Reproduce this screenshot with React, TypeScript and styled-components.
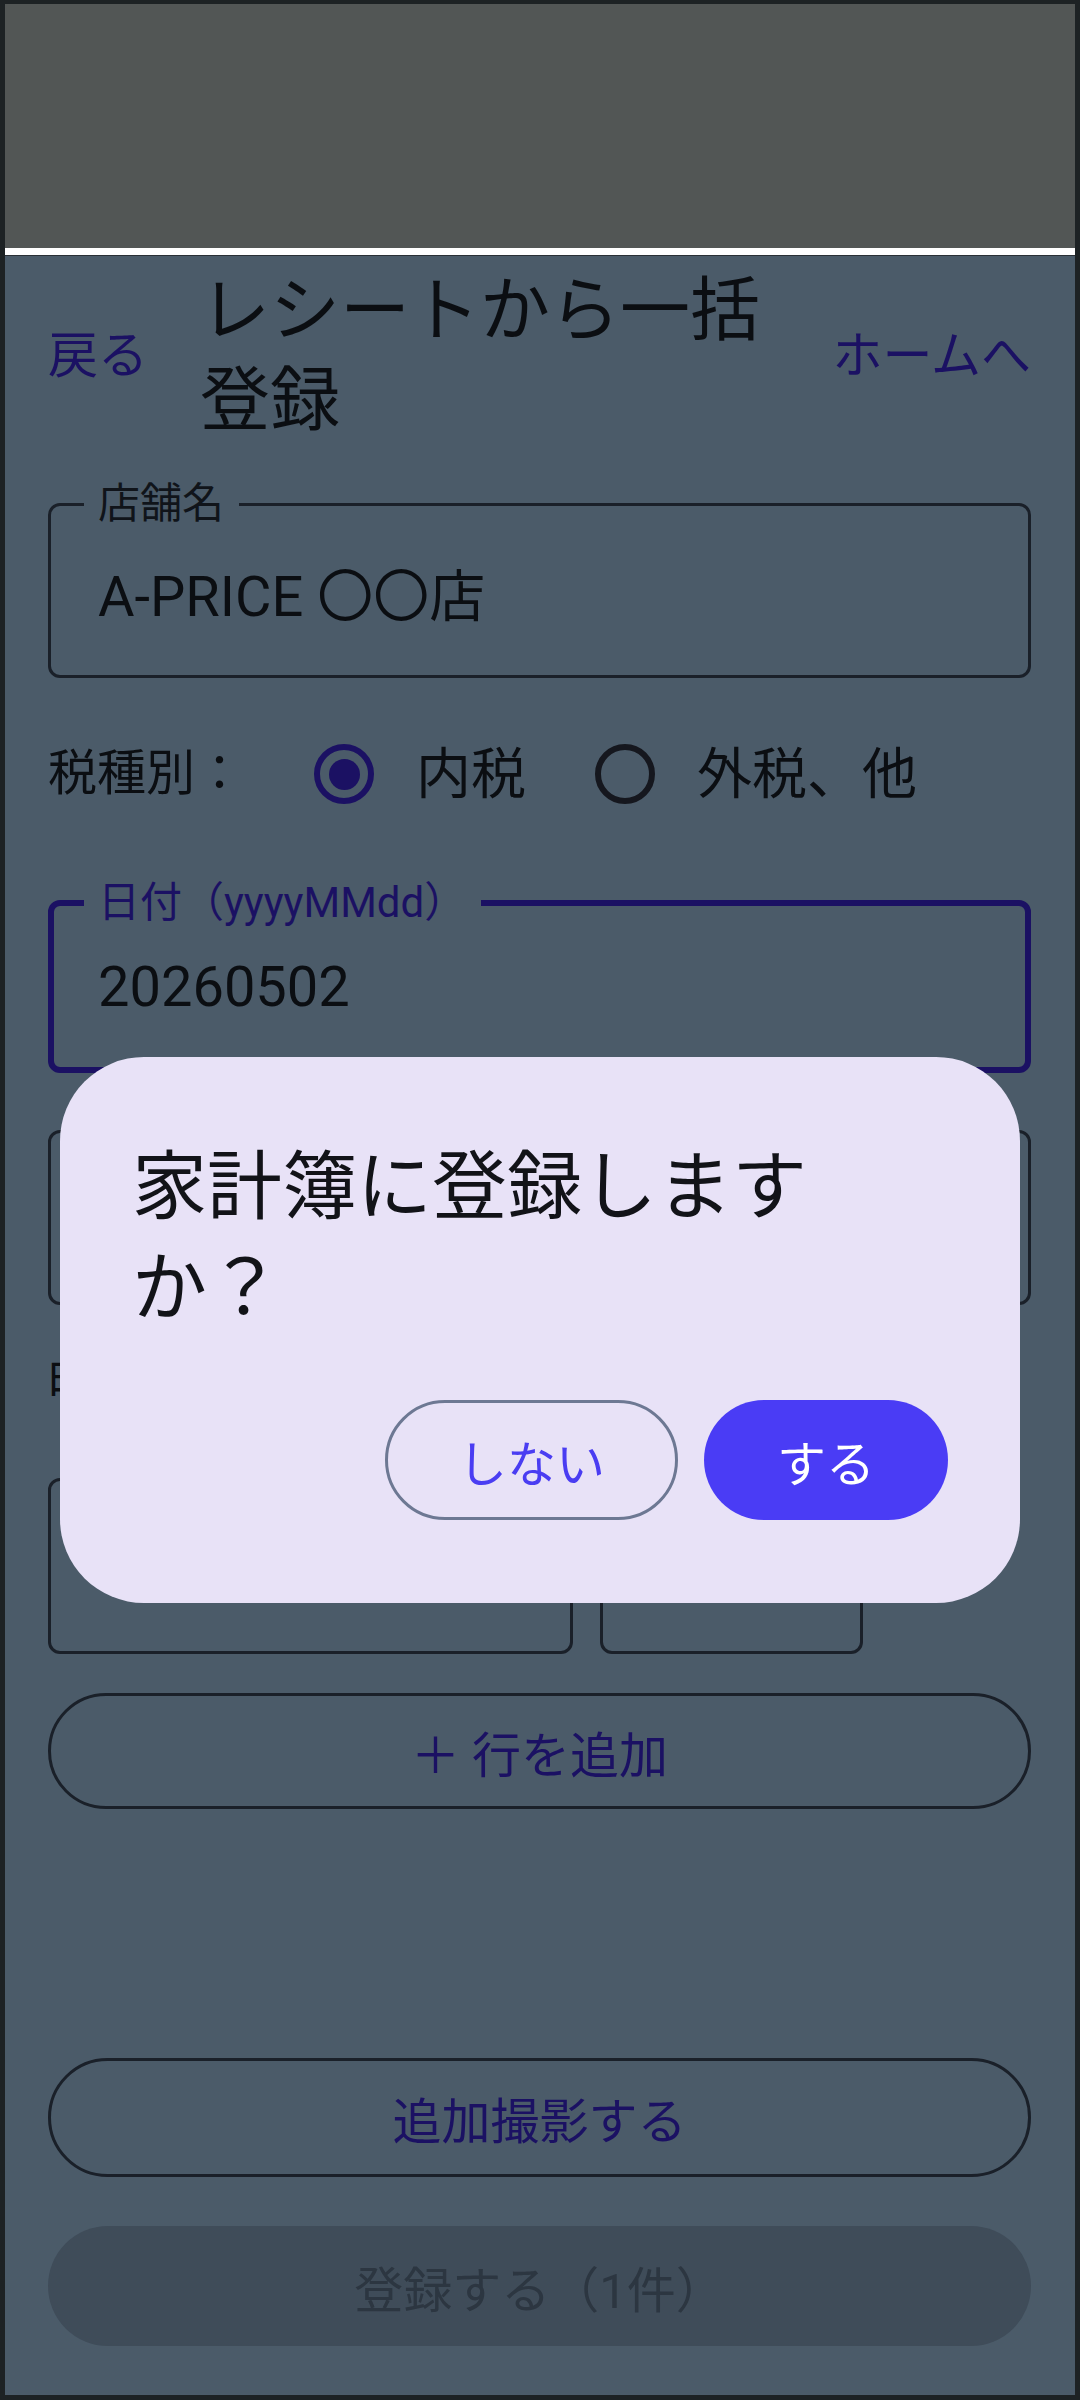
import React from 'react';
import styled, { createGlobalStyle } from 'styled-components';

const GlobalStyle = createGlobalStyle`
  html, body {
    margin: 0;
    padding: 0;
    background: #1d2224;
  }
  body {
    font-family: Roboto, "Noto Sans CJK JP", sans-serif;
  }
  * {
    box-sizing: border-box;
  }
`;

const Frame = styled.div`
  width: 1080px;
  height: 2400px;
  display: flex;
  flex-direction: column;
  border: 5px solid #1d2224;
  border-top-width: 4px;
  background: #4b5b69;
`;

const StatusArea = styled.div`
  flex-shrink: 0;
  height: 244px;
  background: #525655;
`;

const StatusEdge = styled.div`
  flex-shrink: 0;
  height: 8px;
  background: #ffffff;
  border-bottom: 1px solid #2a3036;
`;

const Screen = styled.main`
  position: relative;
  flex: 1;
  display: flex;
  flex-direction: column;
  padding: 10px 44px 49px 43px;
  background: #4b5b69;
  color: #0b0e12;
`;

const Header = styled.header`
  display: flex;
  align-items: center;
  height: 180px;
`;

const NavButton = styled.button`
  flex-shrink: 0;
  padding: 0;
  border: none;
  background: none;
  font-family: inherit;
  font-size: 50px;
  line-height: 66px;
  color: #1b1163;
  white-space: nowrap;
`;

const Title = styled.h1`
  flex: 1;
  margin: 0 36px 0 52px;
  font-size: 70px;
  line-height: 90px;
  font-weight: 400;
  color: #0b0e12;
`;

const Field = styled.fieldset<{ $focused?: boolean; $top: number }>`
  min-width: 0;
  margin: ${(p) => p.$top}px 0 0;
  padding: 0 14px 0 ${(p) => (p.$focused ? 30 : 33)}px;
  border: ${(p) => (p.$focused ? 6 : 3)}px solid ${(p) => (p.$focused ? '#1b1163' : '#1a2029')};
  border-radius: 12px;
`;

const FieldLabel = styled.legend<{ $focused?: boolean }>`
  padding: 0 15px 0 14px;
  font-size: 42px;
  line-height: 48px;
  color: ${(p) => (p.$focused ? '#1b1163' : '#10141a')};
`;

const FieldValue = styled.div<{ $focused?: boolean; $h?: number }>`
  display: flex;
  align-items: center;
  height: ${(p) => p.$h ?? (p.$focused ? 140 : 147)}px;
  padding: 0 0 20px 14px;
  font-size: 56px;
  color: #0b0e12;
  white-space: nowrap;
`;

const TaxRow = styled.div`
  display: flex;
  align-items: center;
  height: 144px;
  margin-top: 24px;
`;

const RowLabel = styled.span`
  width: 224px;
  font-size: 49px;
  line-height: 66px;
  color: #0b0e12;
`;

const RadioOption = styled.label<{ $gap?: number }>`
  display: flex;
  align-items: center;
  margin-left: ${(p) => p.$gap ?? 0}px;
  font-size: 55px;
  line-height: 70px;
  color: #0b0e12;
`;

const RadioHit = styled.span`
  display: flex;
  align-items: center;
  justify-content: center;
  width: 144px;
  height: 144px;
`;

const RadioRing = styled.span<{ $checked?: boolean }>`
  display: flex;
  align-items: center;
  justify-content: center;
  width: 60px;
  height: 60px;
  border: 6px solid ${(p) => (p.$checked ? '#1b1163' : '#15171e')};
  border-radius: 50%;
`;

const RadioDot = styled.span`
  width: 31px;
  height: 31px;
  border-radius: 50%;
  background: #1b1163;
`;

const SectionLabel = styled.div`
  margin-top: 46px;
  font-size: 48px;
  line-height: 66px;
  color: #0b0e12;
`;

const ItemRow = styled.div`
  display: grid;
  grid-template-columns: 2fr 1fr 141px;
  column-gap: 27px;
  margin-top: 61px;
`;

const OutlinedPill = styled.button<{ $top?: number; $h: number }>`
  flex-shrink: 0;
  width: 100%;
  height: ${(p) => p.$h}px;
  margin-top: ${(p) => p.$top ?? 0}px;
  border: 3px solid #1a2029;
  border-radius: 999px;
  background: transparent;
  font-family: inherit;
  font-size: 49px;
  color: #1b1163;
`;

const DisabledPill = styled.button`
  flex-shrink: 0;
  width: 100%;
  height: 120px;
  margin-top: 49px;
  border: none;
  border-radius: 999px;
  background: #3f4c59;
  font-family: inherit;
  font-size: 49px;
  color: #2c3641;
`;

const Spacer = styled.div`
  flex: 1;
`;

const Scrim = styled.div`
  position: absolute;
  inset: 0;
  display: flex;
  align-items: center;
  justify-content: center;
  padding-top: 9px;
`;

const Dialog = styled.div`
  width: 960px;
  padding: 80px 72px 83px;
  border-radius: 84px;
  background: #e8e2f7;
`;

const DialogTitle = styled.h2`
  margin: 0;
  font-size: 75px;
  line-height: 101px;
  font-weight: 400;
  color: #121318;
`;

const DialogActions = styled.div`
  display: flex;
  justify-content: flex-end;
  gap: 26px;
  margin-top: 61px;
`;

const DialogButton = styled.button<{ $filled?: boolean }>`
  height: 120px;
  padding: 0 ${(p) => (p.$filled ? 73 : 70)}px;
  border: ${(p) => (p.$filled ? 'none' : '3px solid #6d7893')};
  border-radius: 60px;
  background: ${(p) => (p.$filled ? '#4a3cf5' : 'transparent')};
  font-family: inherit;
  font-size: 49px;
  color: ${(p) => (p.$filled ? '#ffffff' : '#4a3df2')};
`;

const App = () => {
  return (
    <Frame>
      <GlobalStyle />
      <StatusArea />
      <StatusEdge />
      <Screen>
        <Header>
          <NavButton>戻る</NavButton>
          <Title>レシートから一括登録</Title>
          <NavButton>ホームへ</NavButton>
        </Header>

        <Field $top={34}>
          <FieldLabel>店舗名</FieldLabel>
          <FieldValue>A-PRICE 〇〇店</FieldValue>
        </Field>

        <TaxRow>
          <RowLabel>税種別：</RowLabel>
          <RadioOption>
            <RadioHit>
              <RadioRing $checked>
                <RadioDot />
              </RadioRing>
            </RadioHit>
            内税
          </RadioOption>
          <RadioOption $gap={27}>
            <RadioHit>
              <RadioRing />
            </RadioHit>
            外税、他
          </RadioOption>
        </TaxRow>

        <Field $focused $top={33}>
          <FieldLabel $focused>日付（yyyyMMdd）</FieldLabel>
          <FieldValue $focused>20260502</FieldValue>
        </Field>

        {/* covered by the dialog: only its outline shows */}
        <Field $top={57}>
          <FieldValue $h={169} />
        </Field>

        <SectionLabel>明細</SectionLabel>

        <ItemRow>
          <Field $top={0}>
            <FieldValue $h={170} />
          </Field>
          <Field $top={0}>
            <FieldValue $h={170} />
          </Field>
          <div />
        </ItemRow>

        <OutlinedPill $top={39} $h={116}>＋ 行を追加</OutlinedPill>

        <Spacer />

        <OutlinedPill $h={119}>追加撮影する</OutlinedPill>
        <DisabledPill disabled>登録する（1件）</DisabledPill>

        <Scrim>
          <Dialog role="dialog">
            <DialogTitle>家計簿に登録しますか？</DialogTitle>
            <DialogActions>
              <DialogButton>しない</DialogButton>
              <DialogButton $filled>する</DialogButton>
            </DialogActions>
          </Dialog>
        </Scrim>
      </Screen>
    </Frame>
  );
};

export default App;
